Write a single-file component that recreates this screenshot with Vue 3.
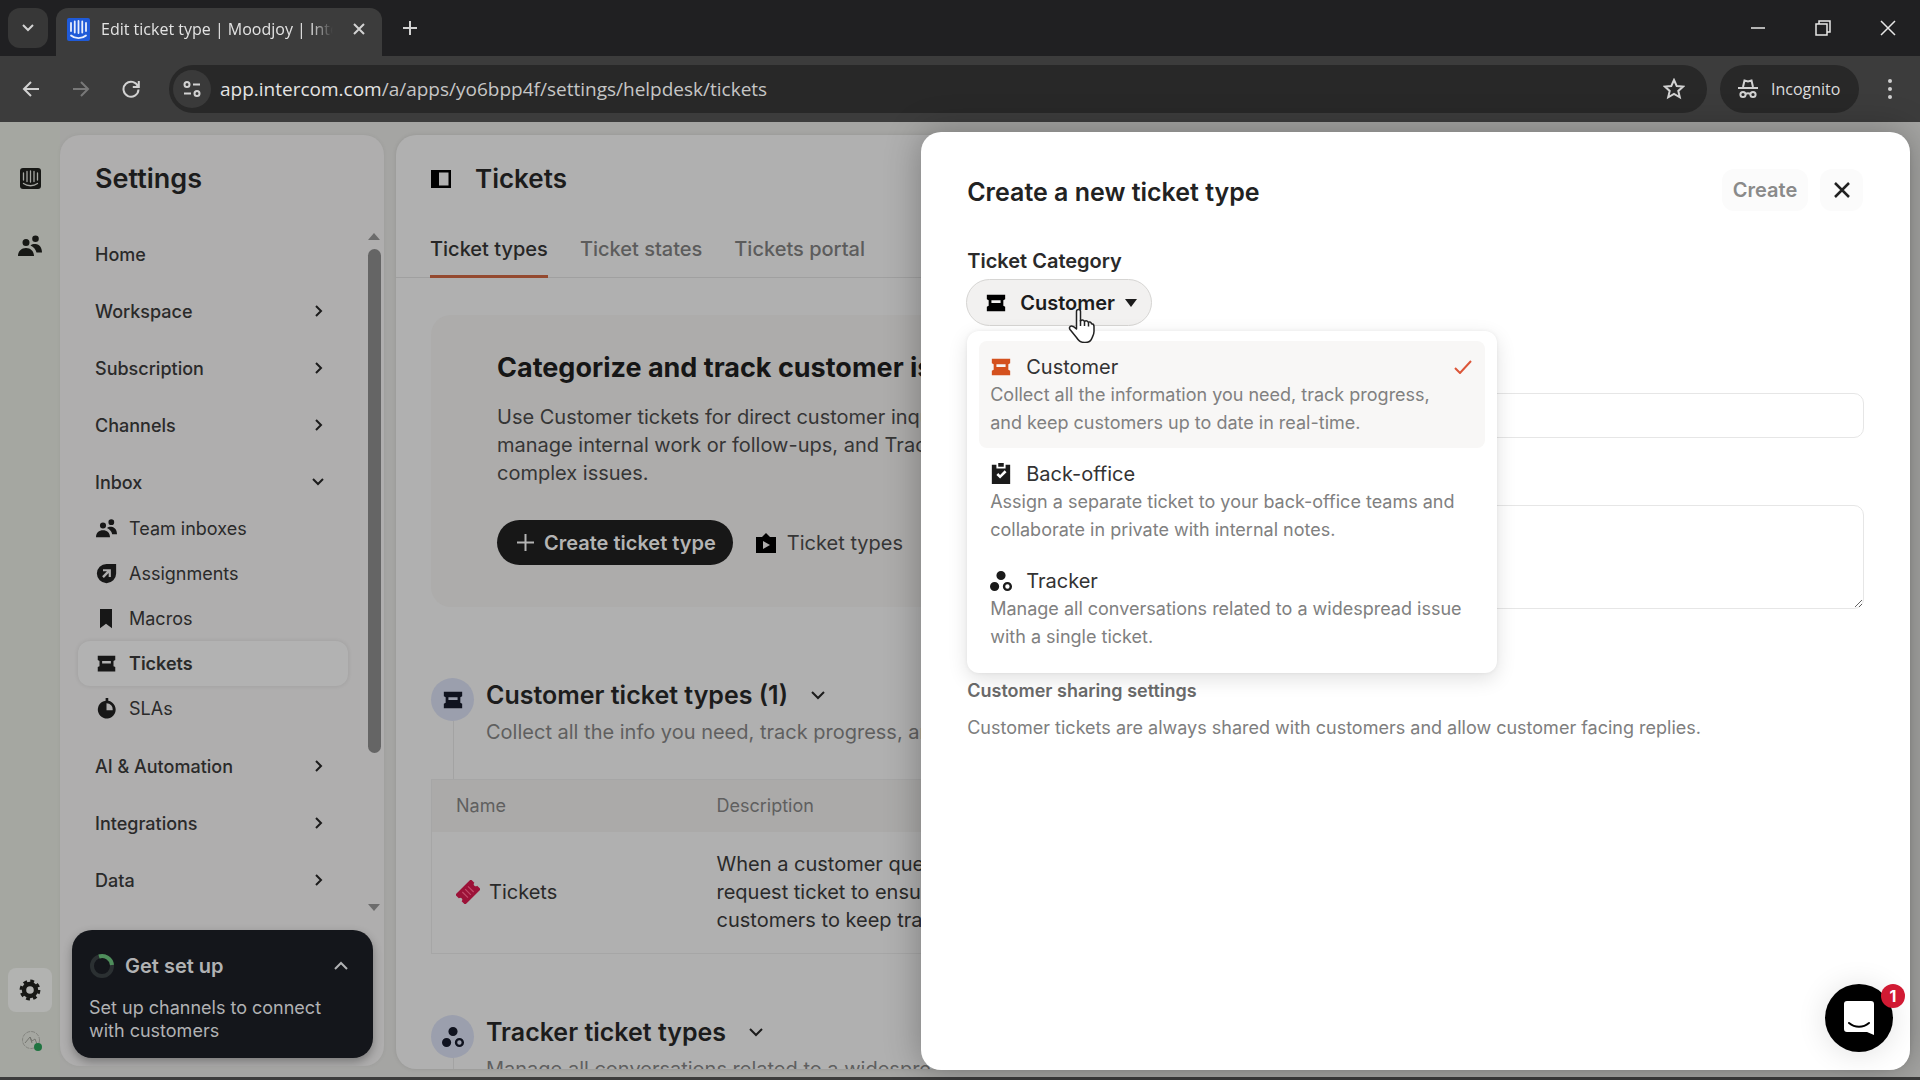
<script setup>
import { ref } from 'vue'

const TICKET = 'M2 3h20v5l-2 1v6l2 1v5H2v-5l2-1V9L2 8zM7 9v3h10V9z'
const TRACKER = 'M12 1a5 5 0 1 1 0 10 5 5 0 0 1 0-10zM5 13a5 5 0 1 1 0 10 5 5 0 0 1 0-10zM19 13a5 5 0 1 1 0 10 5 5 0 0 1 0-10zm0 2.600a2.400 2.400 0 1 0 0 4.800 2.400 2.400 0 0 0 0-4.800z'
const PEOPLE = 'M8 5a3.500 3.500 0 1 1 0 7 3.500 3.500 0 0 1 0-7zM0 22c0-5 3.500-8 8-8s8 3 8 8zM17.500 1.500a3.300 3.300 0 1 1 0 6.600 3.300 3.300 0 0 1 0-6.600zM12.500 11.500c1.500-1.500 3.500-1.700 5-1.500 4 .5 6.500 3.500 6.500 8.500h-5.500c-.8-3.500-3-5.500-6-7z'

const topItems = ['Home', 'Workspace', 'Subscription', 'Channels']
const bottomItems = ['AI & Automation', 'Integrations', 'Data']
const inboxItems = [
  { label: 'Team inboxes', path: PEOPLE },
  { label: 'Assignments', path: 'M12 1h11v11A11 11 0 1 1 12 1zM8 7v2.500h4.500L7 15l2 2 5.500-5.500V16H17V7z' },
  { label: 'Macros', path: 'M3 1h18v22l-9-5-9 5z' },
  { label: 'Tickets', path: TICKET, active: true },
  { label: 'SLAs', path: 'M11 0h3v3.200A10.200 10.200 0 1 1 8 4l3-1zM12 6v8h7a7 7 0 0 0-7-8z' }
]
const tabs = ['Ticket types', 'Ticket states', 'Tickets portal']
const categories = [
  { name: 'Customer', path: TICKET, lines: ['Collect all the information you need, track progress,', 'and keep customers up to date in real-time.'] },
  { name: 'Back-office', path: 'M2 2h5v4h10V2h5v21H2zM9 0h6v4H9zM7 13l4 4 7-7-2-2-5 5-2-2z', lines: ['Assign a separate ticket to your back-office teams and', 'collaborate in private with internal notes.'] },
  { name: 'Tracker', path: TRACKER, lines: ['Manage all conversations related to a widespread issue', 'with a single ticket.'] }
]
const selected = ref('Customer')
const name = ref('')
const description = ref('')
</script>

<template>
  <div class="window">
    <header class="tabstrip">
      <button class="tab-search" aria-label="Search tabs"><svg width="14" height="14" viewBox="0 0 14 14" class="line"><path d="M2 4l5 5 5-5" /></svg></button>
      <div class="tab">
        <svg width="23" height="23" viewBox="0 0 23 23"><rect width="23" height="23" rx="2" fill="#1f5ad8" /><path d="M4 5v8M7.750 3.500v11M11.500 3v12M15.250 3.500v11M19 5v8M4 17.500c4 3.500 11 3.500 15 0" stroke="#e8eefc" stroke-width="1.800" stroke-linecap="round" fill="none" /></svg>
        <span class="tab-title">Edit ticket type | Moodjoy | Intercom</span>
        <button aria-label="Close tab"><svg width="12" height="12" viewBox="0 0 12 12" class="line"><path d="M1 1l10 10M11 1L1 11" /></svg></button>
      </div>
      <button class="new-tab" aria-label="New tab"><svg width="16" height="16" viewBox="0 0 16 16" class="line"><path d="M8 1v14M1 8h14" /></svg></button>
      <div class="window-controls">
        <button aria-label="Minimize"><svg width="16" height="16" viewBox="0 0 16 16" class="line thin"><path d="M1 8h14" /></svg></button>
        <button aria-label="Restore"><svg width="16" height="16" viewBox="0 0 16 16" class="line thin"><path d="M1 4h11v11H1zM4 4V1h11v11h-3" /></svg></button>
        <button aria-label="Close"><svg width="16" height="16" viewBox="0 0 16 16" class="line thin"><path d="M1 1l14 14M15 1L1 15" /></svg></button>
      </div>
    </header>

    <div class="toolbar">
      <button class="nav" aria-label="Back"><svg width="18" height="18" viewBox="0 0 18 18" class="line"><path d="M17 9H2M9 2L2 9l7 7" /></svg></button>
      <button class="nav dim" aria-label="Forward"><svg width="18" height="18" viewBox="0 0 18 18" class="line"><path d="M1 9h15M9 2l7 7-7 7" /></svg></button>
      <button class="nav" aria-label="Reload"><svg width="18" height="18" viewBox="0 0 18 18" class="line"><path d="M16 6.500A7.500 7.500 0 1 0 16.500 9.500M16.800 1v6h-6" /></svg></button>
      <div class="address">
        <button class="site-info" aria-label="Site information"><svg width="18" height="18" viewBox="0 0 18 18" class="line"><circle cx="4" cy="4.500" r="2.500" /><path d="M10 4.500h7M1 13.500h7" /><circle cx="14" cy="13.500" r="2.500" /></svg></button>
        <span class="url"><b>app.intercom.com</b>/a/apps/yo6bpp4f/settings/helpdesk/tickets</span>
        <svg width="22" height="22" viewBox="0 0 22 22" class="line"><path d="M11 2l2.700 6 6.500.6-4.900 4.300 1.500 6.400L11 16l-5.800 3.300 1.500-6.400L1.800 8.600 8.300 8z" /></svg>
      </div>
      <div class="incognito">
        <svg width="20" height="20" viewBox="0 0 20 20" class="line"><path d="M5 8l1.500-6.500L10 2.500l3.500-1L15 8M0 9h20" /><circle cx="5" cy="15.500" r="2.600" /><circle cx="15" cy="15.500" r="2.600" /><path d="M7.500 15c1.500-1 3.500-1 5 0" /></svg>
        <span>Incognito</span>
      </div>
      <button class="more" aria-label="Browser menu"><svg width="6" height="22" viewBox="0 0 6 22" fill="#cfcfcf"><circle cx="3" cy="3" r="2" /><circle cx="3" cy="11" r="2" /><circle cx="3" cy="19" r="2" /></svg></button>
    </div>

    <div class="app">
      <nav class="rail" aria-label="Primary">
        <a href="#" aria-label="Intercom"><svg width="21" height="21" viewBox="0 0 21 21"><rect width="21" height="21" rx="3" fill="#171815" /><path d="M3.500 5v7M7 3.500v10M10.500 3v11M14 3.500v10M17.500 5v7M3.500 15.500c4 3 10 3 14 0" stroke="#a6a7a2" stroke-width="1.300" stroke-linecap="round" fill="none" /></svg></a>
        <a href="#" aria-label="Contacts"><svg width="24" height="24" viewBox="0 0 24 24"><path :d="PEOPLE" /></svg></a>
        <a href="#" aria-label="Settings" class="rail-settings"><svg width="22" height="22" viewBox="0 0 22 22"><circle cx="11" cy="11" r="6" fill="none" stroke="#171815" stroke-width="4.400" /><circle cx="11" cy="11" r="9" fill="none" stroke="#171815" stroke-width="2.800" stroke-dasharray="3.800 3.270" /></svg></a>
        <a href="#" aria-label="Account" class="avatar"><svg width="24" height="24" viewBox="0 0 24 24" fill="none"><circle cx="11" cy="11" r="8.500" stroke="#83847f" stroke-dasharray="4 1" /><path d="M5 14l5-6 2 4 3-2 2 5M10 8l2 6" stroke="#74756f" /><circle cx="18" cy="18" r="4" fill="#1f7440" /></svg></a>
      </nav>

      <aside class="sidebar">
        <h2>Settings</h2>
        <div class="menu-scroll">
          <nav class="menu" aria-label="Settings">
            <a v-for="item in topItems" :key="item" href="#" class="row">{{ item }}
              <svg v-if="item !== 'Home'" width="14" height="14" viewBox="0 0 14 14"><path d="M5 2l5 5-5 5" /></svg>
            </a>
            <div>
              <a href="#" class="row">Inbox <svg width="14" height="14" viewBox="0 0 14 14"><path d="M2 4l5 5 5-5" /></svg></a>
              <div class="submenu">
                <a v-for="item in inboxItems" :key="item.label" href="#" class="subrow" :class="{ active: item.active }">
                  <svg :width="item.label === 'Macros' ? 16 : 21" height="21" viewBox="0 0 24 24" preserveAspectRatio="none"><path fill-rule="evenodd" :d="item.path" /></svg>{{ item.label }}
                </a>
              </div>
            </div>
            <a v-for="item in bottomItems" :key="item" href="#" class="row">{{ item }}
              <svg width="14" height="14" viewBox="0 0 14 14"><path d="M5 2l5 5-5 5" /></svg>
            </a>
          </nav>
          <div class="scrollbar"><i class="up"></i><i class="thumb"></i><i class="down"></i></div>
        </div>
        <section class="setup">
          <div class="setup-head">
            <svg width="26" height="26" viewBox="0 0 26 26" fill="none"><circle cx="13" cy="13" r="10" stroke="#2b3032" stroke-width="4" /><path d="M10 3.500A10 10 0 0 1 23 12" stroke="#4f8f5c" stroke-width="4" /></svg>
            <h3>Get set up</h3>
            <button aria-label="Collapse"><svg width="16" height="16" viewBox="0 0 16 16"><path d="M2 11l6-6 6 6" /></svg></button>
          </div>
          <p>Set up channels to connect with customers</p>
        </section>
      </aside>

      <main class="content">
        <div class="page-title">
          <svg width="20" height="18" viewBox="0 0 20 18"><path fill-rule="evenodd" d="M0 0h20v18H0zM8 2.500v13h9.500v-13z" /></svg>
          <h1>Tickets</h1>
        </div>
        <nav class="tabs" aria-label="Ticket settings"><a v-for="(tab, i) in tabs" :key="tab" href="#" :class="{ current: i === 0 }">{{ tab }}</a></nav>

        <section class="banner">
          <h2>Categorize and track customer issues</h2>
          <p>Use Customer tickets for direct customer inquiries,<br>manage internal work or follow-ups, and Tracker for<br>complex issues.</p>
          <div class="banner-actions">
            <button class="primary"><svg width="17" height="17" viewBox="0 0 17 17"><path d="M8.500 0v17M0 8.500h17" /></svg>Create ticket type</button>
            <a href="#"><svg width="20" height="20" viewBox="0 0 20 20"><path fill-rule="evenodd" d="M0 4h6l4-4 4 4h6v16H0zM7 8v8l7-4z" /></svg>Ticket types</a>
          </div>
        </section>

        <section class="group">
          <div class="group-head">
            <span class="bubble"><svg width="22" height="22" viewBox="0 0 24 24"><path fill-rule="evenodd" :d="TICKET" /></svg></span>
            <div>
              <h2>Customer ticket types (1) <svg width="16" height="16" viewBox="0 0 16 16"><path d="M2 5l6 6 6-6" /></svg></h2>
              <p>Collect all the info you need, track progress, and</p>
            </div>
          </div>
          <table>
            <thead><tr><th scope="col">Name</th><th scope="col">Description</th></tr></thead>
            <tbody>
              <tr>
                <td><span class="type"><svg width="24" height="24" viewBox="0 0 24 24"><g transform="rotate(-45 12 12)"><path fill="#9c1238" d="M1 5h22v5a2 2 0 0 0 0 4v5H1v-5a2 2 0 0 0 0-4z" /><path d="M8 8v8M12 8v8M16 8v8" stroke="#c14a69" stroke-width="1.200" /></g></svg>Tickets</span></td>
                <td>When a customer query needs follow-up, create a<br>request ticket to ensure it is tracked, and update<br>customers to keep track of progress.</td>
              </tr>
            </tbody>
          </table>
        </section>

        <section class="group tracker">
          <div class="group-head">
            <span class="bubble"><svg width="22" height="22" viewBox="0 0 24 24"><path fill-rule="evenodd" :d="TRACKER" /></svg></span>
            <div>
              <h2>Tracker ticket types <svg width="16" height="16" viewBox="0 0 16 16"><path d="M2 5l6 6 6-6" /></svg></h2>
              <p>Manage all conversations related to a widespread issue.</p>
            </div>
          </div>
        </section>
      </main>

      <div class="drawer" role="dialog" aria-labelledby="drawer-title">
        <header class="drawer-head">
          <h2 id="drawer-title">Create a new ticket type</h2>
          <button class="create" disabled>Create</button>
          <button class="close" aria-label="Close"><svg width="16" height="16" viewBox="0 0 16 16"><path d="M1 1l14 14M15 1L1 15" /></svg></button>
        </header>
        <div class="category">
          <span id="category-label" class="label">Ticket Category</span>
          <button class="picker" aria-haspopup="listbox" aria-expanded="true" aria-labelledby="category-label">
            <svg width="22" height="22" viewBox="0 0 24 24"><path fill-rule="evenodd" :d="TICKET" /></svg>
            <span>{{ selected }}</span>
            <i class="caret"></i>
          </button>
          <svg class="cursor" width="28" height="35" viewBox="0 0 28 35"><path d="M8.500 3.500a2 2 0 0 1 4 0v9.500q2-2 4 .3 2.300-1.300 3.700.9 2.700-.8 3.300 1.600 2.500 0 2.500 2.700v5c0 2.500-1 4-2 6.500-1 3-3 4.500-7 4.500-5 0-6.500-2-8.500-5L2 21.500c-1-1.500-.5-3.500 1.500-3.500 1.500 0 3.500 1.500 5 3z" fill="#fff" stroke="#222" stroke-width="1.500" stroke-linejoin="round" /><path d="M12.500 12v6M16.500 13v5M20.500 14.500V18.500" stroke="#222" stroke-width="1.500" fill="none" /></svg>
          <div class="dropdown" role="listbox" aria-labelledby="category-label">
            <button v-for="c in categories" :key="c.name" role="option" :aria-selected="c.name === selected" class="option" :class="{ chosen: c.name === selected }" @click="selected = c.name">
              <span class="option-title">
                <svg class="glyph" width="22" height="22" viewBox="0 0 24 24"><path fill-rule="evenodd" :d="c.path" /></svg>{{ c.name }}
                <svg v-if="c.name === selected" class="check" width="18" height="14" viewBox="0 0 18 14"><path d="M1 8l5 5L17 1" /></svg>
              </span>
              <span v-for="line in c.lines" :key="line" class="option-line">{{ line }}</span>
            </button>
          </div>
        </div>
        <input v-model="name" type="text" aria-label="Ticket type name">
        <textarea v-model="description" aria-label="Ticket type description"></textarea>
        <section class="sharing">
          <h3>Customer sharing settings</h3>
          <p>Customer tickets are always shared with customers and allow customer facing replies.</p>
        </section>
      </div>

      <button class="messenger" aria-label="Open messenger">
        <svg width="32" height="36" viewBox="0 0 32 36"><path d="M4 1h24a3 3 0 0 1 3 3v31l-7-3H4a3 3 0 0 1-3-3V4a3 3 0 0 1 3-3z" fill="#fff" /><path d="M6 23c6 5 14 5 20 0" stroke="#000" stroke-width="2" stroke-linecap="round" fill="none" /></svg>
        <span class="badge">1</span>
      </button>
    </div>
  </div>
</template>

<style>
body { margin: 0; background: #3c3c3c; }
</style>

<style scoped>
* { box-sizing: border-box; }
h1, h2, h3, p { margin: 0; font-weight: 400; }
button { margin: 0; padding: 0; border: 0; background: none; color: inherit; font: inherit; display: flex; align-items: center; justify-content: center; }
a { color: inherit; text-decoration: none; }
svg { flex: none; display: block; }
.line { fill: none; stroke: #d2d2d2; stroke-width: 2; }
.line.thin { stroke: #e6e6e6; stroke-width: 1.5; }

.window { height: 100vh; display: flex; flex-direction: column; font-family: Inter, sans-serif; font-size: 18px; color: #1c1c1c; overflow: hidden; padding-bottom: 3px; }
.tabstrip { height: 56px; display: flex; align-items: flex-start; background: #202022; padding: 8px 0 0 8px; font-family: "Open Sans", sans-serif; flex: none; }
.tab-search { width: 40px; height: 40px; border-radius: 12px; background: #373737; }
.tab { width: 326px; height: 48px; margin-left: 8px; padding: 0 16px 6px 11px; display: flex; align-items: center; background: #3c3c3c; border-radius: 12px 12px 0 0; color: #e3e3e3; font-size: 16px; }
.tab-title { width: 232px; margin: 0 20px 0 11px; overflow: hidden; white-space: nowrap; -webkit-mask-image: linear-gradient(90deg, #000 90%, transparent); mask-image: linear-gradient(90deg, #000 90%, transparent); }
.new-tab { width: 40px; height: 40px; margin-left: 8px; }
.window-controls { margin-left: auto; display: flex; }
.window-controls button { width: 65px; height: 40px; }
.toolbar { height: 66px; flex: none; display: flex; align-items: center; background: #3c3c3c; padding: 0 26px 0 22px; font-family: "Open Sans", sans-serif; }
.nav { width: 18px; margin-right: 32px; }
.nav.dim { opacity: .4; }
.address { flex: 1; height: 48px; border-radius: 24px; background: #282828; display: flex; align-items: center; padding: 0 22px 0 4px; margin: 0 13px 0 -3px; }
.site-info { width: 38px; height: 38px; border-radius: 19px; background: #3a3a3a; }
.url { flex: 1; margin-left: 9px; font-size: 19px; color: #c6c6c6; }
.url b { font-weight: 400; color: #e4e4e4; }
.incognito { width: 139px; height: 48px; border-radius: 24px; background: #282828; display: flex; align-items: center; gap: 13px; padding-left: 18px; color: #dcdcdc; font-size: 16px; }
.more { margin-left: 26px; width: 9px; }

.app { position: relative; flex: 1; min-height: 0; display: flex; background: #a5a5a3; }
.rail { width: 60px; flex: none; display: flex; flex-direction: column; align-items: center; background: #a5a7a1; padding: 46px 0 24px; fill: #171815; }
.rail a + a { margin-top: 45px; }
.rail a.rail-settings { margin-top: auto; width: 44px; height: 44px; border-radius: 8px; background: #b2b3b1; display: flex; align-items: center; justify-content: center; }
.rail a.avatar { margin-top: 17px; margin-left: 4px; }

.sidebar { width: 324px; flex: none; margin: 13px 12px 11px 0; border-radius: 20px; background: #afaeae; display: flex; flex-direction: column; overflow: hidden; box-shadow: 0 0 4px rgba(0, 0, 0, .06); }
.sidebar h2 { padding: 28px 0 0 35px; font-size: 27px; line-height: 32px; font-weight: 600; }
.menu-scroll { flex: 1; min-height: 0; display: flex; justify-content: space-between; padding-top: 34px; }
.menu { width: 270px; margin: 1px 0 0 18px; display: flex; flex-direction: column; gap: 9px; font-weight: 500; color: #2a2a2a; }
.row { height: 48px; padding: 0 23px 0 17px; display: flex; align-items: center; justify-content: space-between; }
.row svg, .group h2 svg { fill: none; stroke: #1c1c1c; stroke-width: 2; }
.submenu { padding-bottom: 2px; }
.subrow { height: 45px; padding-left: 18px; border-radius: 12px; display: flex; align-items: center; font-weight: 400; gap: 12px; }
.subrow svg { fill: #171717; }
.subrow svg[width="16"] { margin: 0 3px 0 2px; }
.subrow.active { font-weight: 600; background: #b2b2b2; box-shadow: 0 0 4px rgba(0, 0, 0, .1); }
.scrollbar { width: 14px; height: 682px; margin-right: 3px; display: flex; flex-direction: column; align-items: center; }
.scrollbar i { display: block; }
.up { margin-top: 4px; border: 6px solid transparent; border-top: 0; border-bottom: 7px solid #6c6c6c; }
.thumb { width: 13px; height: 504px; margin-top: 9px; border-radius: 7px; background: #656565; }
.down { margin-top: auto; border: 6px solid transparent; border-bottom: 0; border-top: 7px solid #6c6c6c; }
.setup { height: 128px; flex: none; margin: 0 11px 8px 12px; padding: 21px 17px 0; border-radius: 20px; background: #14161b; color: #b1b2b4; box-shadow: 0 4px 10px rgba(0, 0, 0, .3); line-height: 23px; font-weight: 500; }
.setup-head { display: flex; align-items: center; }
.setup-head h3 { flex: 1; margin-left: 10px; font-size: 20px; line-height: 30px; font-weight: 600; }
.setup-head button { margin-right: 7px; }
.setup-head button svg { fill: none; stroke: #b1b2b4; stroke-width: 2; }
.setup p { margin-top: 15px; }

.content { flex: 1; min-width: 0; margin: 13px 10px 8px 0; border-radius: 20px; background: #b0b0b0; overflow: hidden; white-space: nowrap; box-shadow: 0 0 4px rgba(0, 0, 0, .1); font-size: 20px; line-height: 28px; }
.page-title { display: flex; align-items: center; gap: 24px; padding: 28px 0 0 35px; }
h1 { font-size: 26px; line-height: 32px; font-weight: 600; }
.tabs { display: flex; gap: 32px; height: 83px; padding: 40px 34px 0; border-bottom: 1px solid #a0a0a0; color: #5c5c5c; font-weight: 500; font-size: 20px; }
.tabs a { height: 43px; }
.tabs a.current { color: #262626; border-bottom: 3px solid #94492f; }
.banner { height: 292px; margin: 37px 35px 0; padding: 35px 66px 0; border-radius: 20px; background: #adacab; color: #363636; }
.banner h2 { font-size: 27px; line-height: 36px; font-weight: 700; color: #161616; }
.banner p { margin-top: 17px; }
.banner-actions { display: flex; align-items: center; gap: 23px; margin-top: 33px; }
.banner-actions a { display: flex; align-items: center; gap: 11px; }
.primary { height: 45px; padding: 0 17px 0 20px; border-radius: 23px; gap: 10px; background: #171717; color: #b4b4b4; font-weight: 600; }
.primary svg { stroke: #b4b4b4; stroke-width: 2; }
.group { margin: 70px 35px 0; }
.group-head { display: flex; height: 102px; gap: 12px; }
.bubble { width: 43px; height: 43px; margin-top: 1px; border-radius: 50%; background: #9b9fad; display: flex; align-items: center; justify-content: center; fill: #10131f; position: relative; }
.bubble::after { content: ""; position: absolute; left: 22px; top: 43px; height: 58px; border-left: 1px solid #a3a3a3; }
.group h2 { display: flex; align-items: center; gap: 22px; font-size: 25px; line-height: 36px; font-weight: 600; }
.group p { margin-top: 5px; color: #5f5f5f; }
table { width: 100%; border-collapse: collapse; border: 1px solid #a6a6a6; table-layout: fixed; color: #2a2a2a; }
th { height: 52px; padding: 0 24px; text-align: left; font-weight: 400; font-size: 18px; color: #5f5f5f; background: #abaaa9; }
th:first-child { width: 261px; }
td { height: 122px; padding: 0 24px; }
.type { display: flex; align-items: center; gap: 9px; }
.tracker { margin-top: 60px; }

.drawer { position: absolute; top: 10px; right: 10px; bottom: 7px; width: 51.5vw; border-radius: 20px; background: #fff; padding: 36px 46px 0; box-shadow: 0 0 36px rgba(0, 0, 0, .3); }
.drawer-head { display: flex; align-items: center; height: 44px; }
.drawer-head h2 { flex: 1; font-size: 25px; font-weight: 600; color: #222; padding-top: 4px; }
.create { width: 86px; height: 42px; margin-right: 12px; border-radius: 12px; background: #fbfbfb; color: #8a8a8a; font-size: 20px; font-weight: 600; }
.close { width: 43px; height: 42px; margin-right: 1px; border-radius: 12px; background: #fbfbfb; }
.close svg { stroke: #222; stroke-width: 2.5; }
.label { font-size: 20px; line-height: 28px; font-weight: 600; color: #2a2a2a; }
.category { position: relative; height: 181px; padding-top: 35px; display: flex; flex-direction: column; align-items: flex-start; }
.picker { height: 47px; margin: 4px 0 0 -1px; padding: 0 14px 0 18px; border: 1px solid #d6d5d3; border-radius: 24px; background: #f2f1f0; font-weight: 600; font-size: 20px; }
.picker span { margin: 0 10px 0 13px; }
.caret { border: 6px solid transparent; border-top: 8px solid #1c1c1c; border-bottom: 0; }
.cursor { position: absolute; left: 101px; top: 96px; z-index: 3; }
.dropdown { position: absolute; z-index: 2; top: 119px; left: 0; width: 530px; padding: 10px 12px 11px; border-radius: 12px; background: #fff; box-shadow: 0 6px 20px rgba(0, 0, 0, .12), 0 0 4px rgba(0, 0, 0, .06); font-size: 18px; line-height: 28px; }
.option { width: 100%; height: 107px; padding: 1px 0 0 11px; flex-direction: column; align-items: flex-start; border-radius: 8px; color: #808080; }
.option.chosen { background: #f8f7f6; }
.option-title { width: 100%; display: flex; align-items: center; gap: 14px; color: #333; font-size: 20px; }
.glyph { fill: #1b1b1b; }
.chosen .glyph { fill: #d4511e; }
.check { margin: 0 13px 0 auto; fill: none; stroke: #dc5639; stroke-width: 2; }
input, textarea { width: 100%; border: 1px solid #e6e6e6; border-radius: 10px; background: #fff; font: inherit; padding: 8px 12px; outline: 0; margin: 0; display: block; }
input { height: 45px; margin-bottom: 67px; }
textarea { height: 104px; resize: vertical; }
.sharing { margin-top: 68px; line-height: 28px; color: #7e7e7e; }
.sharing h3 { font-size: 18px; font-weight: 600; color: #6a6a6a; }
.sharing p { margin-top: 9px; }
.messenger { position: absolute; right: 27px; bottom: 25px; width: 68px; height: 68px; border-radius: 50%; background: #000; box-shadow: 0 2px 30px rgba(0, 0, 0, .12); }
.badge { position: absolute; top: 0; right: -12px; width: 24px; height: 24px; border-radius: 50%; background: #d11a33; color: #fff; font-size: 16px; line-height: 24px; font-weight: 700; text-align: center; }
</style>
